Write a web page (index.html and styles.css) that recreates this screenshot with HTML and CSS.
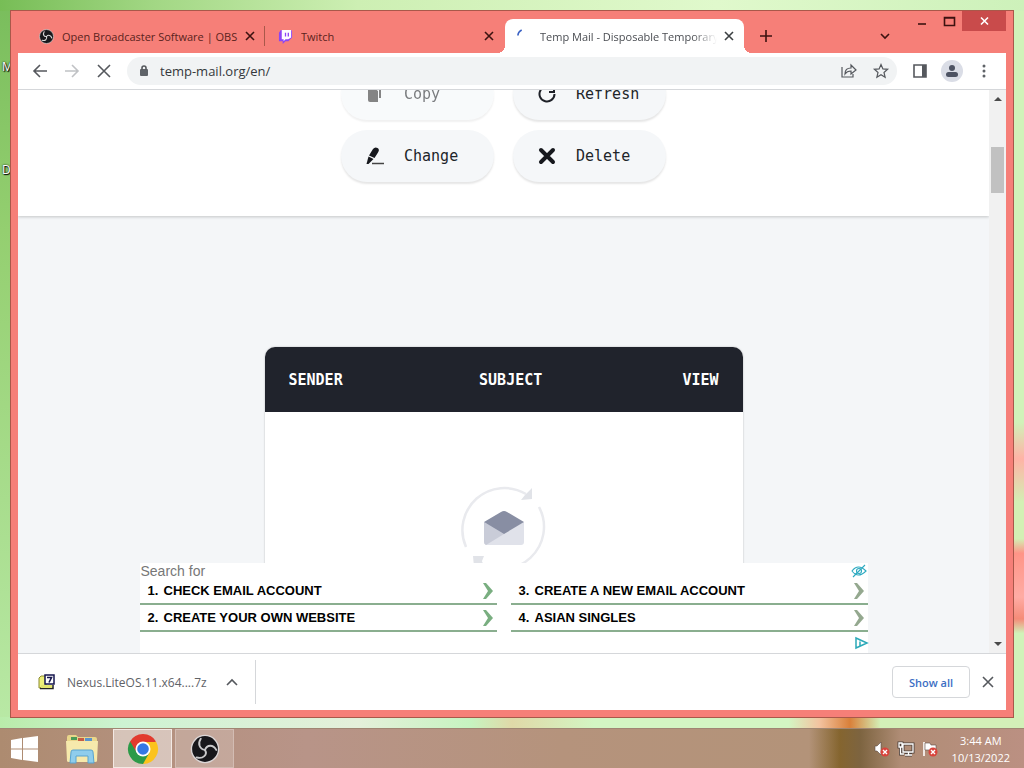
FILE: index.html
```html
<!DOCTYPE html>
<html lang="en">
<head>
    <meta charset="UTF-8">
    <meta name="viewport" content="width=device-width, initial-scale=1.0">
    <title>Temp Mail - Disposable Temporary Email</title>
    <link rel="stylesheet" href="styles.css">
</head>
<body>
    <div class="workspace">
        <span class="desk-label desk-label-m">M</span>
        <span class="desk-label desk-label-d">D</span>
        <div class="window">
            <div class="tabs">
                <div class="tab">
                    <svg class="favicon" viewBox="0 0 32 32"><circle cx="16" cy="16" r="15" fill="#17171b" stroke="#d9d0d0" stroke-width="1.5"/><g fill="none" stroke="#d8d8d8" stroke-width="2.4" stroke-linecap="round"><path d="M16 16C10 17 8 11 11 6"/><path d="M16 16c4-5 10-2 11 3"/><path d="M16 16c2 6-3 10-9 8"/></g></svg>
                    <span class="tab-title">Open Broadcaster Software | OBS</span>
                    <button class="tab-close" aria-label="Close tab"><svg viewBox="0 0 8 8"><path d="M0 0l8 8M8 0l-8 8"/></svg></button>
                </div>
                <div class="tab">
                    <svg class="favicon" viewBox="0 0 16 16"><path d="M3 1h11l1 1v7l-4 4H8l-3 3v-3H1V4z" fill="#8c45f5"/><path d="M4 1h10v8l-3 2H8l-2 2v-2H4z" fill="#fff"/><path d="M8 4v4M11 4v4" stroke="#8c45f5" stroke-width="1.4"/></svg>
                    <span class="tab-title">Twitch</span>
                    <button class="tab-close" aria-label="Close tab"><svg viewBox="0 0 8 8"><path d="M0 0l8 8M8 0l-8 8"/></svg></button>
                </div>
                <div class="tab active">
                    <svg class="favicon" viewBox="0 0 16 16"><path d="M1 7q0-4 4-6" fill="none" stroke="#3b62c4" stroke-width="1.8"/></svg>
                    <span class="tab-title fade">Temp Mail - Disposable Temporary</span>
                    <button class="tab-close" aria-label="Close tab"><svg viewBox="0 0 8 8"><path d="M0 0l8 8M8 0l-8 8"/></svg></button>
                </div>
                <button class="new-tab" aria-label="New tab"><svg width="12" height="12" viewBox="0 0 12 12"><path d="M6 0v12M0 6h12"/></svg></button>
                <button class="tab-search" aria-label="Search tabs"><svg width="10" height="6" viewBox="0 0 10 6"><path d="M1 1l4 4 4-4"/></svg></button>
                <div class="controls">
                    <button class="minimize" aria-label="Minimize"><svg width="8" height="10" viewBox="0 0 8 10"><path d="M0 8h8"/></svg></button>
                    <button class="maximize" aria-label="Maximize"><svg width="11" height="9" viewBox="0 0 11 9"><path d="M.5 .5h10v8H.5zM0 1h11" stroke-width="1"/></svg></button>
                    <button class="close" aria-label="Close"><svg width="9" height="8" viewBox="0 0 9 8"><path d="M1 .5l7 7M8 .5l-7 7"/></svg></button>
                </div>
            </div>

            <div class="toolbar">
                <button aria-label="Back"><svg width="14" height="14" viewBox="0 0 14 14"><path d="M14 7H1M7 1L1 7l6 6"/></svg></button>
                <button class="off" aria-label="Forward" disabled><svg width="14" height="14" viewBox="0 0 14 14"><path d="M0 7h13M7 1l6 6-6 6"/></svg></button>
                <button aria-label="Stop"><svg width="12" height="12" viewBox="0 0 12 12"><path d="M0 0l12 12M12 0L0 12"/></svg></button>
                <div class="omnibox">
                    <svg class="lock" width="10" height="12" viewBox="0 0 10 12"><rect x="1" y="4" width="8" height="7" rx="1" fill="#5f6368"/><path d="M3 5V3q0-2 2-2t2 2v2"/></svg>
                    <input type="text" value="temp-mail.org/en/" aria-label="Address">
                    <button aria-label="Share"><svg width="16" height="14" viewBox="0 0 16 14"><path class="thin" d="M1 3v10h11v-3M4 10q0-6 6-6V1l5 5-5 4V7q-4 0-6 3z"/></svg></button>
                    <button aria-label="Bookmark"><svg width="16" height="16" viewBox="0 0 16 16"><path class="thin" d="M8 1.500l1.900 4.400 4.700.4-3.600 3.200 1.100 4.700L8 11.700l-4.100 2.500L5 9.500 1.400 6.300l4.700-.4z"/></svg></button>
                </div>
                <button aria-label="Side panel"><svg width="14" height="14" viewBox="0 0 14 14"><path d="M1 1h12v12H1z"/><rect x="9" y="1" width="4" height="12" fill="#55585d"/></svg></button>
                <button aria-label="Profile"><svg width="22" height="22" viewBox="0 0 22 22"><circle cx="11" cy="11" r="11" fill="#dadde6"/><circle cx="11" cy="8" r="3" fill="#4d5363"/><rect x="5" y="12" width="12" height="5" rx="2.500" fill="#4d5363"/></svg></button>
                <button aria-label="Menu"><svg width="4" height="14" viewBox="0 0 4 14"><g fill="#5f6368"><circle cx="2" cy="2" r="1.500"/><circle cx="2" cy="7" r="1.500"/><circle cx="2" cy="12" r="1.500"/></g></svg></button>
            </div>

            <div class="viewport">
                <div class="page">
                    <div class="actions">
                        <button class="action off" disabled><svg width="18" height="18" viewBox="0 0 18 18"><path d="M2 3h6l4 3v11H4q-2 0-2-2z" fill="#333"/><path d="M8 1h4l3 3v9h-2V5L8 2z" fill="#333"/></svg>Copy</button>
                        <button class="action"><svg width="18" height="18" viewBox="0 0 18 18"><path d="M16.500 9A7.500 7.500 0 1 1 14 3.400M11 7h5V1" fill="none" stroke="#1e2128" stroke-width="2"/></svg>Refresh</button>
                        <button class="action"><svg width="18" height="18" viewBox="0 0 18 18"><path d="M7 2q2-2.500 4.500-1t.5 4.500L8.500 11 3 8.500z" fill="#16181d"/><path d="M2.500 9.500L7.500 12l-5 5H.5z" fill="#16181d"/><path d="M6 16.500h12" stroke="#444" stroke-width="1.500"/></svg>Change</button>
                        <button class="action"><svg width="18" height="18" viewBox="0 0 18 18"><path d="M3 3l12 12M15 3L3 15" stroke="#16181d" stroke-width="4" stroke-linecap="round"/></svg>Delete</button>
                    </div>
                    <div class="inbox">
                        <table>
                            <tr><th>SENDER</th><th>SUBJECT</th><th>VIEW</th></tr>
                        </table>
                        <div class="empty">
                            <svg width="90" height="90" viewBox="0 0 90 90">
                                <g fill="none" stroke="#e9eaee" stroke-width="2.500"><path d="M7 63A42 42 0 0 1 67 10"/><path d="M80 23A42 42 0 0 1 20 78"/></g>
                                <path d="M73 4v11l-11 1 4-5zM14 72h11l-2 5 1 5-9 1z" fill="#e1e3e8"/>
                                <path d="M25 38l20 10 20-10v20q0 3-3 3H28q-3 0-3-3z" fill="#e0e2ea"/>
                                <path d="M25 38l20 12-18 11q-2-1-2-3z" fill="#c9ccd8"/>
                                <path d="M25 38l17-10q3-2 6 0l17 10-20 12z" fill="#888ea3"/>
                            </svg>
                        </div>
                    </div>
                    <div class="ad">
                        <div class="ad-head">
                            <span>Search for</span>
                            <svg width="16" height="14" viewBox="0 0 16 14"><g fill="none" stroke="#2ba9c0" stroke-width="1.1"><path d="M1 7q6-8 14 0-8 8-14 0zM2 13L14 1"/><circle cx="8" cy="7" r="2.500"/></g></svg>
                        </div>
                        <div class="ad-links">
                            <a href="#"><b>1.</b>CHECK EMAIL ACCOUNT<svg class="go" viewBox="0 0 10 16"><path d="M0 0h3l7 8-7 8H0l5-8z"/></svg></a>
                            <a href="#"><b>3.</b>CREATE A NEW EMAIL ACCOUNT<svg class="go pale" viewBox="0 0 10 16"><path d="M0 0h3l7 8-7 8H0l5-8z"/></svg></a>
                            <a href="#"><b>2.</b>CREATE YOUR OWN WEBSITE<svg class="go" viewBox="0 0 10 16"><path d="M0 0h3l7 8-7 8H0l5-8z"/></svg></a>
                            <a href="#"><b>4.</b>ASIAN SINGLES<svg class="go pale" viewBox="0 0 10 16"><path d="M0 0h3l7 8-7 8H0l5-8z"/></svg></a>
                        </div>
                        <div class="ad-foot">
                            <svg width="13" height="12" viewBox="0 0 13 12"><path d="M1 1l11 5-11 5zM5 4.500v4M5 2.800v1" fill="none" stroke="#2ba9b8" stroke-width="1.500"/></svg>
                        </div>
                    </div>
                </div>
                <div class="scrollbar">
                    <svg width="8" height="4" viewBox="0 0 8 4"><path d="M0 4l4-4 4 4z"/></svg>
                    <div class="thumb"></div>
                    <svg class="down" width="8" height="4" viewBox="0 0 8 4"><path d="M0 0l4 4 4-4z"/></svg>
                </div>
            </div>

            <div class="downloads">
                <div class="download">
                    <svg width="17" height="16" viewBox="0 0 17 16"><path d="M1 4l2-2h5v12H1z" fill="#eef07a" stroke="#8b8b30"/><path d="M2 14.500h13V11" fill="none" stroke="#222" stroke-width="1.500"/><path d="M8 11h6v3H3v-3z" fill="#e3e56d"/><rect x="7" y="1" width="9" height="9" fill="#fff" stroke="#15154d" stroke-width="1.500"/><path d="M9 3.500h4.500L11 8.500" fill="none" stroke="#15154d" stroke-width="1.600"/></svg>
                    <span>Nexus.LiteOS.11.x64....7z</span>
                    <button aria-label="Download options"><svg width="10" height="6" viewBox="0 0 10 6"><path d="M0 6l5-5 5 5"/></svg></button>
                </div>
                <button class="show-all">Show all</button>
                <button class="hide" aria-label="Hide downloads"><svg width="10" height="10" viewBox="0 0 10 10"><path d="M0 0l10 10M10 0L0 10"/></svg></button>
            </div>
        </div>
    </div>

    <div class="taskbar">
        <button class="start" aria-label="Start"><svg width="27" height="26" viewBox="0 0 27 26"><path d="M0 4l11-2v10.500H0zM12 2l15-2v12.500H12zM0 13.500h11V24L0 22zM12 13.500h15V26l-15-2z" fill="#fff"/></svg></button>
        <button aria-label="File Explorer"><svg width="34" height="30" viewBox="0 0 34 30"><path d="M2 3q0-2 2-2h7l2 2h17q2 0 2 2v22H2z" fill="#e9d68b"/><path d="M6 3h6v3H6z" fill="#4c9b58"/><path d="M13 4h6v3h-6z" fill="#c85c43"/><path d="M20 4h7v3h-7z" fill="#5a94cc"/><path d="M1 7h32l-1 20q0 1-2 1H4q-2 0-2-1z" fill="#f6e9ac"/><path d="M5 29l1-11q0-2 2-2h18q2 0 2 2l1 11h-6v-7H11v7z" fill="#8fcdec" stroke="#58a3cf"/></svg></button>
        <button class="task current" aria-label="Chrome"><svg width="30" height="30" viewBox="0 0 30 30"><path d="M15 15L2.010 7.500A15 15 0 0 1 28 7.500z" fill="#e23a2e"/><path d="M15 15L28 7.500A15 15 0 0 1 15 30z" fill="#fbc31c"/><path d="M15 15v15A15 15 0 0 1 2 7.500z" fill="#2c9a48"/><path d="M15 8h13l-6.500 11z" fill="#fbc31c"/><path d="M21.500 18.500L15 30l-3-8z" fill="#2c9a48"/><path d="M2 7.500L8.500 18.500 15 8z" fill="#e23a2e"/><path d="M2 7.500l6.800 11.500L6 22z" fill="#2c9a48"/><circle cx="15" cy="15" r="7.500" fill="#fff"/><circle cx="15" cy="15" r="5.800" fill="#3578e5"/></svg></button>
        <button class="task" aria-label="OBS Studio"><svg width="30" height="30" viewBox="0 0 32 32"><circle cx="16" cy="16" r="14.500" fill="#17171b" stroke="#dcd6d6" stroke-width="1.500"/><g fill="none" stroke="#c9c9cb" stroke-width="2" stroke-linecap="round"><path d="M16 17C10 16 8 10 11.500 5"/><path d="M16 17c2-6 9-6 12 0"/><path d="M16 17c3 5-2 10-9 8"/></g></svg></button>
        <div class="tray">
            <svg width="16" height="16" viewBox="0 0 16 16"><path d="M1 5h2l4-4v13l-4-4H1z" fill="#fff" stroke="#5a4a44" stroke-width=".6"/><circle cx="11" cy="11" r="4.500" fill="#d8443c"/><path d="M9 9l4 4M13 9l-4 4" stroke="#fff" stroke-width="1.400"/></svg>
            <svg width="16" height="16" viewBox="0 0 16 16"><path d="M5 3h10v8H5zM7 14h7M10.500 11v3M1 2h3v4H1zM2.500 6v7H6" fill="none" stroke="#4d403a" stroke-width="3"/><path d="M5 3h10v8H5zM7 14h7M10.500 11v3M1 2h3v4H1zM2.500 6v7H6" fill="none" stroke="#fff" stroke-width="1.300"/></svg>
            <svg width="16" height="16" viewBox="0 0 16 16"><path d="M2 1v14" stroke="#fff" stroke-width="1.600"/><path d="M3 2h5l1 2h5v6H8L7 9H3z" fill="#fff" stroke="#5a4a44" stroke-width=".6"/><circle cx="11" cy="11" r="4.500" fill="#d8443c"/><path d="M9 9l4 4M13 9l-4 4" stroke="#fff" stroke-width="1.400"/></svg>
            <div class="clock"><span>3:44 AM</span><span>10/13/2022</span></div>
        </div>
    </div>
</body>
</html>
```
FILE: styles.css
```css
*{
    box-sizing: border-box;
}
body{
    margin:0;
    height:100vh;
    display:flex;
    flex-direction: column;
    overflow:hidden;
    font-family:"Open Sans", "Noto Sans", sans-serif;
    font-size:12px;
    color:#3c4043;
    background:
        linear-gradient(#0000 58%, #ffb3a6 63%, #d3f0b4 69% 74%, #ff9487 76%, #ffaca4 82%, #f58b78 85%, #0000 87%) right top / 12px 728px no-repeat,
        linear-gradient(90deg, #b9ecaa, #cdf3d2 12%, #e4f0da 35%, #c6f4c0 46%, #e0d9a8 50%, #d3f6c3 58% 77%, #f3c3a0 80%, #d9803a 83%, #d3f0b8 86%) left 717px / 100% 12px no-repeat,
        linear-gradient(90deg, #77bd56, #a2d784 15%, #cdefb3 35%, #e0f9cc 70%, #cdf1ba) left top / 100% 11px no-repeat,
        linear-gradient(90deg, #0000 50%, #d1f2b9 50%),
        linear-gradient(#79bd5c, #94cf70 30%, #bcebaa);
}
button{
    display:flex;
    align-items: center;
    justify-content: center;
    padding:0;
    border:none;
    background:none;
    font-family:inherit;
    color:inherit;
}
svg{
    flex:none;
    display:block;
    overflow:visible;
}
.workspace{
    position:relative;
    flex:1;
    min-height:0;
    display:flex;
    padding:10px;
}
.desk-label{
    position:absolute;
    left:2px;
    color:white;
    text-shadow:0 0 2px black, 1px 1px 1px black;
}
.desk-label-m{
    top:58px;
}
.desk-label-d{
    top:161px;
}
.window{
    position:relative;
    flex:1;
    min-width:0;
    display:flex;
    flex-direction: column;
    padding:0 7px 7px;
    border:1px #a9584a solid;
    background-color:#f67f78;
}

/* tabs */
.tabs{
    height:42px;
    display:flex;
    align-items: flex-end;
    gap:1px;
    padding-left:9px;
    color:#5a1f1c;
}
.tab{
    flex:0 1 238px;
    min-width:0;
    height:34px;
    display:flex;
    align-items: center;
    gap:8px;
    padding:0 11px 0 12px;
}
.tab:first-child{
    background:linear-gradient(#a9584a, #a9584a) right center / 1px 20px no-repeat;
}
.tab.active{
    position:relative;
    flex-basis:239px;
    border-radius:8px 8px 0 0;
    background-color:white;
    color:#4a4d52;
}
.active::before, .active::after{
    content:"";
    position:absolute;
    bottom:0;
    width:8px;
    height:8px;
}
.active::before{
    right:100%;
    background:radial-gradient(circle at 0 0, #0000 8px, white 8px);
}
.active::after{
    left:100%;
    background:radial-gradient(circle at 100% 0, #0000 8px, white 8px);
}
.favicon{
    width:15px;
    height:15px;
}
.tab-title{
    flex:1;
    overflow:hidden;
    white-space:nowrap;
    font-size:11px;
}
.tab-title.fade{
    -webkit-mask-image:linear-gradient(90deg, black 86%, transparent);
    mask-image:linear-gradient(90deg, black 86%, transparent);
}
.tab-close svg{
    width:8px;
    height:8px;
}
.tabs button path{
    fill:none;
    stroke:#3d1210;
    stroke-width:1.6;
}
.tabs .active button path{
    stroke:#3c4043;
}
.new-tab{
    width:42px;
    height:34px;
}
.tab-search{
    width:24px;
    height:34px;
    margin:0 9px 0 auto;
}
.controls{
    align-self:flex-start;
    display:flex;
}
.controls button{
    height:20px;
}
.minimize{
    width:29px;
}
.maximize{
    width:26px;
}
.close{
    width:44px;
    background-color:#c94b4b;
}
.tabs .close path{
    stroke:white;
}

/* address bar */
.toolbar{
    height:37px;
    display:flex;
    align-items: center;
    padding:0 6px;
    border-bottom:1px #d5d7da solid;
    background-color:white;
}
.toolbar button{
    width:32px;
    height:28px;
}
.toolbar path{
    fill:none;
    stroke:#55585d;
    stroke-width:1.6;
}
.toolbar .thin{
    stroke-width:1.2;
}
.toolbar .off path{
    stroke:#c0c2c5;
}
.omnibox{
    flex:1;
    height:28px;
    display:flex;
    align-items: center;
    margin:0 7px;
    padding-left:12px;
    border-radius:14px;
    background-color:#f1f3f4;
}
.omnibox input{
    flex:1;
    min-width:0;
    margin-left:11px;
    padding:0;
    border:none;
    outline:none;
    background:none;
    font-family:inherit;
    font-size:13px;
    color:#35383c;
}

/* page */
.viewport{
    flex:1;
    min-height:0;
    display:flex;
}
.page{
    position:relative;
    flex:1;
    min-width:0;
    overflow:hidden;
    background-color:#f4f6f8;
}
.actions{
    height:126px;
    display:grid;
    grid-template-columns:153px 153px;
    grid-auto-rows:52px;
    gap:10px 19px;
    justify-content: center;
    align-content: end;
    padding-bottom:34px;
    overflow:hidden;
    background-color:white;
    box-shadow:0 1px 3px #0003;
}
.action{
    justify-content: flex-start;
    gap:20px;
    padding-left:25px;
    border-radius:26px;
    background-color:#f5f7f9;
    box-shadow:0 2px 2px #0000001a;
    font-family:"DejaVu Sans Mono", monospace;
    font-size:15px;
    color:#212529;
}
.action.off{
    opacity:0.6;
}
.inbox{
    max-width:478px;
    margin:131px auto 0;
    border-radius:10px 10px 0 0;
    overflow:hidden;
    background-color:white;
    box-shadow:0 0 2px #0004;
}
table{
    width:100%;
    table-layout:fixed;
    border-collapse:collapse;
    background-color:#20232c;
}
th{
    width:33%;
    height:65px;
    padding:0;
    font-family:"DejaVu Sans Mono", monospace;
    font-size:15px;
    color:white;
}
th:first-child{
    width:35%;
    padding-left:24px;
    text-align:left;
}
th:last-child{
    width:32%;
    padding-right:24px;
    text-align:right;
}
.empty{
    height:260px;
    display:flex;
    justify-content: center;
    padding-top:72px;
}
.ad{
    position:absolute;
    bottom:0;
    left:0;
    right:0;
    max-width:728px;
    margin:0 auto;
    background-color:white;
    font-family:"Liberation Sans", Arial, sans-serif;
}
.ad-head{
    height:15px;
    display:flex;
    justify-content: space-between;
    align-items: center;
    padding:0 1px;
    font-size:14px;
    color:#777;
}
.ad-links{
    display:grid;
    grid-template-columns:1fr 1fr;
    column-gap:14px;
}
.ad-links a{
    height:27px;
    display:flex;
    align-items: center;
    padding:0 4px 0 8px;
    border-bottom:2px #8aae8f solid;
    font-size:13px;
    font-weight:bold;
    color:black;
    text-decoration:none;
}
.ad-links b{
    width:16px;
}
.go{
    width:10px;
    height:16px;
    margin-left:auto;
    fill:#79ae80;
}
.go.pale{
    fill:#94a88f;
}
.ad-foot{
    height:21px;
    display:flex;
    align-items: center;
    justify-content: flex-end;
}
.scrollbar{
    width:17px;
    display:flex;
    flex-direction: column;
    align-items: center;
    padding:7px 0;
    background-color:#f1f1f1;
    fill:#4a4a4a;
}
.thumb{
    width:13px;
    height:46px;
    margin-top:46px;
    background-color:#c1c1c1;
}
.down{
    margin-top:auto;
}

/* downloads */
.downloads{
    height:57px;
    display:flex;
    align-items: center;
    padding-right:13px;
    border-top:1px #d5d7da solid;
    background-color:white;
}
.downloads button path{
    fill:none;
    stroke:#55585d;
    stroke-width:1.6;
}
.download{
    height:44px;
    display:flex;
    align-items: center;
    padding:0 18px 0 20px;
    border-right:1px #d5d7da solid;
    font-size:12px;
    color:#5f6368;
}
.download span{
    width:140px;
    margin:0 20px 0 12px;
    white-space:nowrap;
}
.show-all{
    width:78px;
    height:32px;
    margin-left:auto;
    border:1px #d5d7da solid;
    border-radius:4px;
    font-size:11px;
    font-weight:600;
    color:#3c6fc4;
}
.hide{
    margin-left:13px;
}

/* taskbar */
.taskbar{
    height:40px;
    display:flex;
    gap:3px;
    border-top:1px #a08673 solid;
    background:linear-gradient(90deg, #ad8b70, #b4917f 15%, #b89488 30%, #b5937c 55%, #b39379 79%, #85652f 82%, #7d6440 84%, #b08d76 88%, #bb9082);
}
.taskbar button{
    width:57px;
}
.taskbar .start{
    width:48px;
    margin-right:2px;
}
.taskbar .task{
    width:59px;
    border:1px #d3bcb3 solid;
    background-color:#fff3;
}
.taskbar .current{
    border-color:#f3e9e4;
    background-color:#fff7;
}
.tray{
    margin-left:auto;
    display:flex;
    align-items: center;
    gap:8px;
    padding-right:14px;
}
.clock{
    display:flex;
    flex-direction: column;
    align-items: center;
    margin-left:6px;
    font-size:11px;
    line-height:17px;
    color:white;
}
```
